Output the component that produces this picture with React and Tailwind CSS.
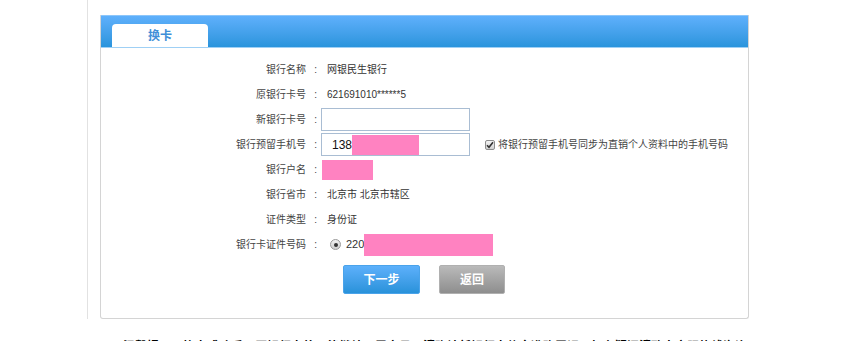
import React from 'react'

const rows = [
  { label: '银行名称', value: '网银民生银行' },
  { label: '原银行卡号', value: '621691010******5' },
  { label: '新银行卡号', type: 'input' },
  { label: '银行预留手机号', type: 'phone' },
  { label: '银行户名', type: 'name' },
  { label: '银行省市', value: '北京市 北京市辖区' },
  { label: '证件类型', value: '身份证' },
  { label: '银行卡证件号码', type: 'idno' },
]

const CheckBox = () => (
  <span className="flex h-[10px] w-[10px] items-center justify-center rounded-[2px] border border-[#8e8e8e] bg-gradient-to-b from-[#f4f4f4] to-[#d2d2d2]">
    <svg width="8" height="8" viewBox="0 0 8 8">
      <path d="M1 4.2 L3 6.3 L7 1.2" fill="none" stroke="#333" strokeWidth="1.6" />
    </svg>
  </span>
)

const Radio = () => (
  <span className="flex h-[11px] w-[11px] items-center justify-center rounded-full border border-[#9a9a9a] bg-gradient-to-b from-[#f2f2f2] to-[#cfcfcf]">
    <span className="h-[4px] w-[4px] rounded-full bg-[#333]" />
  </span>
)

const Value = ({ row }) => {
  if (row.type === 'input') {
    return <div className="h-[23px] w-[149px] border border-[#a9bdd3] bg-white" />
  }
  if (row.type === 'phone') {
    return (
      <div className="flex items-center">
        <div className="flex h-[23px] w-[149px] items-center border border-[#a9bdd3] bg-white pl-[10px] text-[12px] text-[#111]">
          <span>138</span>
          <span className="h-[20px] w-[67px] bg-[#ff82c1]" />
        </div>
        <div className="ml-[15px] flex items-center gap-[3px] text-[#444]">
          <CheckBox />
          <span>将银行预留手机号同步为直销个人资料中的手机号码</span>
        </div>
      </div>
    )
  }
  if (row.type === 'name') {
    return <div className="ml-[1px] h-[20px] w-[51px] bg-[#ff82c1]" />
  }
  if (row.type === 'idno') {
    return (
      <div className="flex items-center pl-[9px]">
        <Radio />
        <span className="ml-[5px] text-[11px] text-[#333]">220</span>
        <span className="h-[22px] w-[129px] bg-[#ff82c1]" />
      </div>
    )
  }
  return <span className="pl-[6px] text-[#333]">{row.value}</span>
}

const App = () => {
  return (
    <div
      className="h-[341px] w-[855px] overflow-hidden bg-white text-[10px]"
      style={{ fontFamily: '"Liberation Sans", "Noto Sans CJK SC", sans-serif' }}
    >
      <div className="ml-[87px] h-[319px] w-[662px] border-l border-[#e2e2e2] pl-[12px] pt-[15px]">
        <div className="flex h-[304px] flex-col rounded-b-[3px] border-x border-b border-[#d4d4d4]">
          <div className="flex h-[32px] items-end border-t border-[#8cc6fa] bg-gradient-to-b from-[#5eb0fc] to-[#2994dc] pl-[11px]">
            <div className="flex h-[23px] w-[96px] items-center justify-center rounded-t-[4px] bg-white text-[12px] font-bold text-[#3f8fd8]">
              换卡
            </div>
          </div>
          <div className="h-[1px] bg-[#9fd0f5]" />
          <div className="flex flex-col pt-[9px]">
            {rows.map((row) => (
              <div key={row.label} className="flex h-[25px] items-center">
                <div className="flex w-[216px] shrink-0 justify-end text-[#444]">
                  <span>{row.label}</span>
                  <span className="w-[11px] text-right">:</span>
                </div>
                <div className="ml-[4px]">
                  <Value row={row} />
                </div>
              </div>
            ))}
          </div>
          <div className="mt-[8px] flex pl-[242px]">
            <button className="h-[29px] w-[77px] rounded-[2px] border border-[#4aa3ea] bg-gradient-to-b from-[#5cb0fb] to-[#2892da] text-[12px] font-bold text-white">
              下一步
            </button>
            <button className="ml-[19px] h-[29px] w-[66px] rounded-[2px] border border-[#b0b0b0] bg-gradient-to-b from-[#bababa] to-[#8e8e8e] text-[12px] font-bold text-white">
              返回
            </button>
          </div>
        </div>
      </div>
      <div className="mt-[22px] whitespace-nowrap pl-[123px] text-[12px] font-bold leading-none text-black">
        温馨提示：换卡成功后，原银行卡将不能继续用于交易，请确认新银行卡信息准确无误，如有疑问请致电客服热线咨询。
      </div>
    </div>
  )
}

export default App
